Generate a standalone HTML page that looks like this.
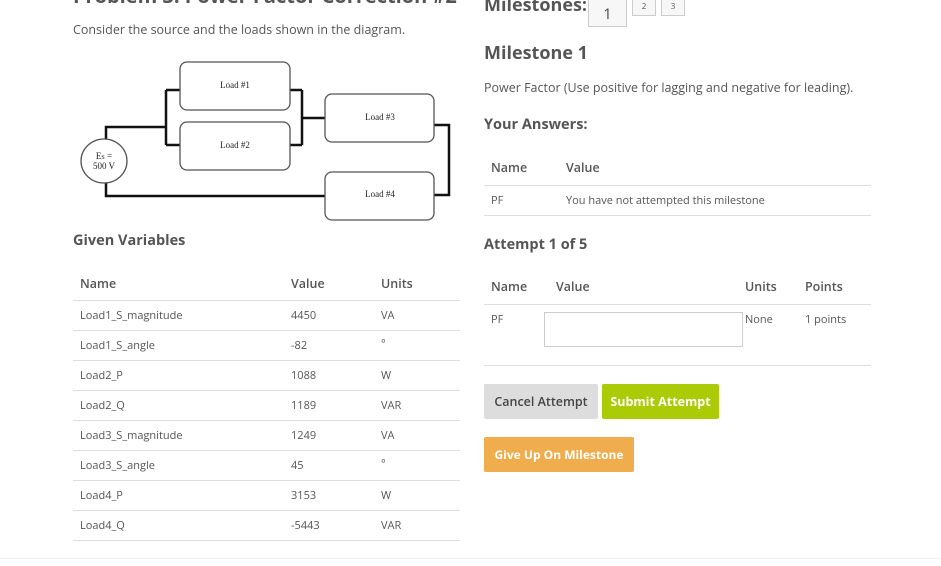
<!DOCTYPE html>
<html><head><meta charset="utf-8"><style>
*{margin:0;padding:0;box-sizing:border-box}
body{width:941px;height:566px;overflow:hidden;background:#fff;font-family:"Open Sans","Liberation Sans",sans-serif;color:#555;position:relative}
.a{position:absolute;white-space:nowrap}
.h{font-weight:bold;color:#555}
.line{position:absolute;height:1px;background:#ddd}
.s{font-size:11px}
.th{font-size:12.5px;color:#555;font-weight:600}
.btn{position:absolute;font-size:12.5px;font-weight:bold;display:flex;align-items:center;justify-content:center;border-radius:2px}
</style></head><body>
<div class="a h" style="left:73px;top:-18px;font-size:20px">Problem 3: Power Factor Correction #2</div>
<div class="a" style="left:73px;top:21px;font-size:12.5px">Consider the source and the loads shown in the diagram.</div>
<svg class="a" style="left:0;top:0" width="470" height="230">
<g fill="none" stroke="#111" stroke-width="2.5">
<path d="M106 140V127H166M166 90V145M166 90H180M166 145H180M290 90H302M290 145H302M302 90V145M302 118H325M434 125H449V195H434M106 182V196H325"/>
</g>
<g fill="#fff" stroke="#555" stroke-width="1.3">
<rect x="180" y="62" width="110" height="48" rx="7"/>
<rect x="180" y="122" width="110" height="48" rx="7"/>
<rect x="325" y="94" width="109" height="48" rx="7"/>
<rect x="325" y="172" width="109" height="48" rx="7"/>
<ellipse cx="104" cy="161" rx="23" ry="22"/>
</g>
<g font-family="Liberation Serif,serif" font-size="9" fill="#222" text-anchor="middle">
<text x="235" y="88">Load #1</text><text x="235" y="148">Load #2</text>
<text x="380" y="120">Load #3</text><text x="380" y="197">Load #4</text>
<text x="104" y="159">E<tspan font-size="6">S</tspan> =</text><text x="104" y="169">500 V</text>
</g></svg>
<div class="a h" style="left:73px;top:231px;font-size:14.5px">Given Variables</div>
<div class="a th" style="left:80px;top:275px">Name</div><div class="a th" style="left:291px;top:275px">Value</div><div class="a th" style="left:381px;top:275px">Units</div>
<div class="line" style="left:73px;top:300px;width:387px"></div>
<div class="a s" style="left:80px;top:308px">Load1_S_magnitude</div><div class="a s" style="left:291px;top:308px">4450</div><div class="a s" style="left:381px;top:308px">VA</div>
<div class="line" style="left:73px;top:330px;width:387px"></div>
<div class="a s" style="left:80px;top:338px">Load1_S_angle</div><div class="a s" style="left:291px;top:338px">-82</div><div class="a s" style="left:381px;top:336px">°</div>
<div class="line" style="left:73px;top:360px;width:387px"></div>
<div class="a s" style="left:80px;top:368px">Load2_P</div><div class="a s" style="left:291px;top:368px">1088</div><div class="a s" style="left:381px;top:368px">W</div>
<div class="line" style="left:73px;top:390px;width:387px"></div>
<div class="a s" style="left:80px;top:398px">Load2_Q</div><div class="a s" style="left:291px;top:398px">1189</div><div class="a s" style="left:381px;top:398px">VAR</div>
<div class="line" style="left:73px;top:420px;width:387px"></div>
<div class="a s" style="left:80px;top:428px">Load3_S_magnitude</div><div class="a s" style="left:291px;top:428px">1249</div><div class="a s" style="left:381px;top:428px">VA</div>
<div class="line" style="left:73px;top:450px;width:387px"></div>
<div class="a s" style="left:80px;top:458px">Load3_S_angle</div><div class="a s" style="left:291px;top:458px">45</div><div class="a s" style="left:381px;top:456px">°</div>
<div class="line" style="left:73px;top:480px;width:387px"></div>
<div class="a s" style="left:80px;top:488px">Load4_P</div><div class="a s" style="left:291px;top:488px">3153</div><div class="a s" style="left:381px;top:488px">W</div>
<div class="line" style="left:73px;top:510px;width:387px"></div>
<div class="a s" style="left:80px;top:518px">Load4_Q</div><div class="a s" style="left:291px;top:518px">-5443</div><div class="a s" style="left:381px;top:518px">VAR</div>
<div class="line" style="left:73px;top:540px;width:387px"></div>
<div class="line" style="left:0;top:558px;width:941px;background:#eee"></div>

<div class="a h" style="left:484px;top:-7px;font-size:18px">Milestones:</div>
<div class="a" style="left:588px;top:-5px;width:39px;height:32px;border:1px solid #ccc;background:#f7f7f7;font-size:15px;text-align:center;padding-top:8px;color:#444">1</div>
<div class="a" style="left:632px;top:-5px;width:24px;height:21px;border:1px solid #ccc;background:#f7f7f7;font-size:8px;text-align:center;padding-top:5px">2</div>
<div class="a" style="left:661px;top:-5px;width:24px;height:21px;border:1px solid #ccc;background:#f7f7f7;font-size:8px;text-align:center;padding-top:5px">3</div>
<div class="a h" style="left:484px;top:41px;font-size:18px">Milestone 1</div>
<div class="a" style="left:484px;top:79px;font-size:12.5px">Power Factor (Use positive for lagging and negative for leading).</div>
<div class="a h" style="left:484px;top:115px;font-size:14.5px">Your Answers:</div>
<div class="a th" style="left:491px;top:159px">Name</div><div class="a th" style="left:566px;top:159px">Value</div>
<div class="line" style="left:484px;top:185px;width:387px"></div>
<div class="a s" style="left:491px;top:193px">PF</div><div class="a s" style="left:566px;top:193px">You have not attempted this milestone</div>
<div class="line" style="left:484px;top:215px;width:387px"></div>
<div class="a h" style="left:484px;top:235px;font-size:14.5px">Attempt 1 of 5</div>
<div class="a th" style="left:491px;top:278px">Name</div><div class="a th" style="left:556px;top:278px">Value</div><div class="a th" style="left:745px;top:278px">Units</div><div class="a th" style="left:805px;top:278px">Points</div>
<div class="line" style="left:484px;top:304px;width:387px"></div>
<div class="a s" style="left:491px;top:312px">PF</div>
<div class="a" style="left:544px;top:312px;width:199px;height:35px;border:1px solid #ccc"></div>
<div class="a s" style="left:745px;top:312px">None</div><div class="a s" style="left:805px;top:312px">1 points</div>
<div class="line" style="left:484px;top:365px;width:387px"></div>
<div class="btn" style="left:484px;top:384px;width:114px;height:35px;background:#ddd;color:#444;font-weight:600">Cancel Attempt</div>
<div class="btn" style="left:602px;top:384px;width:117px;height:35px;background:#aacb06;color:#fff">Submit Attempt</div>
<div class="btn" style="left:484px;top:437px;width:150px;height:35px;background:#efad4d;color:#fff;font-size:12px">Give Up On Milestone</div>
</body></html>
